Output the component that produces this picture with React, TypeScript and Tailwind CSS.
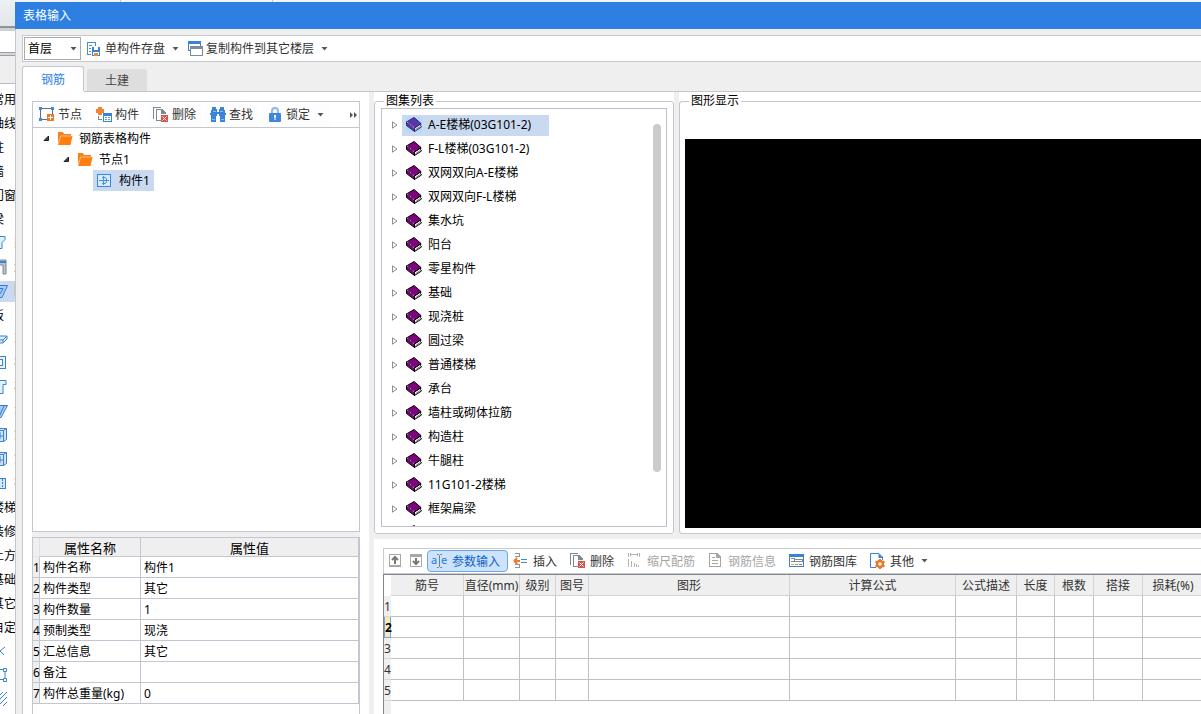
import type { ReactNode } from "react";

const sideItems = [
  { label: "常用" },
  { label: "轴线" },
  { label: "柱" },
  { label: "墙" },
  { label: "门窗" },
  { label: "梁" },
  { label: "梁", icon: "beam" },
  { label: "连", icon: "lintel" },
  { label: "圈", icon: "ring", active: true },
  { label: "板" },
  { label: "现", icon: "slab" },
  { label: "板", icon: "hole" },
  { label: "柱", icon: "cap" },
  { label: "坡", icon: "ramp" },
  { label: "筋", icon: "rebar" },
  { label: "筋", icon: "rebar" },
  { label: "板", icon: "strip" },
  { label: "楼梯" },
  { label: "装修" },
  { label: "土方" },
  { label: "基础" },
  { label: "其它" },
  { label: "自定" },
  { label: "", icon: "point" },
  { label: "", icon: "line" },
  { label: "", icon: "hatch" },
];

const atlas = [
  "A-E楼梯(03G101-2)",
  "F-L楼梯(03G101-2)",
  "双网双向A-E楼梯",
  "双网双向F-L楼梯",
  "集水坑",
  "阳台",
  "零星构件",
  "基础",
  "现浇桩",
  "圆过梁",
  "普通楼梯",
  "承台",
  "墙柱或砌体拉筋",
  "构造柱",
  "牛腿柱",
  "11G101-2楼梯",
  "框架扁梁",
  "",
];

const props = [
  ["构件名称", "构件1"],
  ["构件类型", "其它"],
  ["构件数量", "1"],
  ["预制类型", "现浇"],
  ["汇总信息", "其它"],
  ["备注", ""],
  ["构件总重量(kg)", "0"],
];

const columns = [
  "筋号",
  "直径(mm)",
  "级别",
  "图号",
  "图形",
  "计算公式",
  "公式描述",
  "长度",
  "根数",
  "搭接",
  "损耗(%)",
];

function Icon({ children, crisp = true }: { children: ReactNode; crisp?: boolean }) {
  return (
    <svg
      viewBox="0 0 16 16"
      fill="none"
      shapeRendering={crisp ? "crispEdges" : "auto"}
      className="h-4 w-4 shrink-0"
      aria-hidden="true"
    >
      {children}
    </svg>
  );
}

function Caret() {
  return (
    <svg viewBox="0 0 7 4" className="h-1 w-[7px] shrink-0" aria-hidden="true">
      <path d="M0.500 0h6L3.500 3.500z" fill="#555" />
    </svg>
  );
}

function SideIcon({ name }: { name: string }) {
  return (
    <Icon crisp={false}>
      {name === "beam" && <path d="M1 1.500h12v3l-3 3v6h-3v-6L3 4.500" fill="#e4effb" stroke="#3b82d0" />}
      {name === "lintel" && (
        <>
          <path d="M1 1h13v14h-3V6H1z" fill="#b9c2ca" stroke="#7f8c96" />
          <path d="M1 3h13" stroke="#3b82d0" strokeWidth="2" />
        </>
      )}
      {name === "ring" && <path d="M1 2.500h14.500L10 14.500H6zM4 5.500h7L8 11" fill="#a9cbf2" stroke="#2f7cd6" />}
      {name === "slab" && (
        <>
          <path d="M1 9l5-4h9v3l-4 4H1z" fill="#dcebfb" stroke="#3b82d0" />
          <path d="M1 9h10l4-4M11 9v3" stroke="#3b82d0" />
        </>
      )}
      {name === "hole" && (
        <>
          <rect x="1.500" y="1.500" width="12" height="12" fill="#eaf3fd" stroke="#3b82d0" />
          <rect x="4.500" y="4.500" width="6" height="6" fill="#fff" stroke="#3b82d0" />
        </>
      )}
      {name === "cap" && <path d="M1 1.500h13v4h-3v9H7v-9H1z" fill="#e4effb" stroke="#3b82d0" />}
      {name === "ramp" && <path d="M1 2.500h14.500L9 14.500H5zM12 3L7 14M4 3l4 8" fill="#a9cbf2" stroke="#2f7cd6" />}
      {name === "rebar" && (
        <>
          <path d="M1 3.500l3-2h10.500v11l-3 2H1z" fill="#cfe3fa" stroke="#3b82d0" />
          <path d="M11.500 3.500v11M1 3.500h10.500l3-2M8 5v7M4 9h7" stroke="#3b82d0" />
        </>
      )}
      {name === "strip" && (
        <>
          <rect x="1.500" y="3.500" width="12" height="10" fill="#d5e7fb" stroke="#3b82d0" />
          <path d="M10.500 4v9" stroke="#3b82d0" strokeDasharray="2 1" />
        </>
      )}
      {name === "point" && <path d="M4 8h4l5-4M8 8l4 4" stroke="#3b82d0" />}
      {name === "line" && (
        <>
          <path d="M1 2.500h12v10H1" stroke="#3b82d0" />
          <path d="M11.500 1.500h3v3h-3zM11.500 11.500h3v3h-3z" fill="#fff" stroke="#3b82d0" />
        </>
      )}
      {name === "hatch" && <path d="M7 9l8-8M7 14L15 6M11 15l4-4M3 9l8-8" stroke="#3b82d0" />}
    </Icon>
  );
}

function SaveIcon() {
  return (
    <Icon>
      <path d="M1.500 14V1.500h8V5" stroke="#4a8bd8" />
      <path d="M3 4h3M3 7h2M3 10h2" stroke="#4a8bd8" />
      <path d="M1.500 13.500H5" stroke="#4a8bd8" />
      <path d="M6 6h7l1 1v8H6z" fill="#3b82d6" />
      <path d="M8 6h4v3H8z" fill="#fff" />
      <path d="M7 11h6v3H7z" fill="#fff" />
      <path d="M8 12h4v3H8z" fill="#f08a24" />
    </Icon>
  );
}

function CopyLayersIcon() {
  return (
    <Icon>
      <path d="M1.500 0.500h12v9h-12z" fill="#fff" stroke="#3b82d6" />
      <path d="M1 0h13v3H1z" fill="#3b82d6" />
      <path d="M3.500 5.500h12v9h-12z" fill="#fff" stroke="#7d8b94" />
      <path d="M3 5h13v3H3z" fill="#7d8b94" />
    </Icon>
  );
}

function NodeIcon() {
  return (
    <Icon>
      <path d="M1.500 2v10M3 1.500h9M13.500 2v5M3 12.500h5" stroke="#5c7186" />
      <path d="M0 0h3v3H0zM12 0h3v3h-3zM0 11h3v3H0z" fill="#3b8ae0" />
      <path d="M8 7h7v7H8z" fill="#ef7622" />
      <path d="M9 10.500h5M11.500 8v5" stroke="#fff" />
    </Icon>
  );
}

function ComponentIcon() {
  return (
    <Icon>
      <path d="M2 0h4v2h2v4H6v2H2V6H0V2h2z" fill="#f0803a" />
      <path d="M2.500 9v3.500H6" stroke="#7d8b94" />
      <path d="M7.500 6.500h8v8h-8z" fill="#fff" stroke="#3b82d6" />
      <path d="M7 6h9v3H7z" fill="#3b82d6" />
      <path d="M9 10.500h2M12 10.500h2M9 12.500h2M12 12.500h2" stroke="#5794dc" />
    </Icon>
  );
}

function DeleteIcon() {
  return (
    <Icon>
      <path d="M0.500 12V0.500H8" stroke="#7d8b94" />
      <path d="M3.500 14V2.500H9l3.500 3.500v1M3 13.500h5" stroke="#7d8b94" />
      <path d="M8 2v5h5z" fill="#7d8b94" />
      <path d="M8 8h7v7H8z" fill="#d9504f" />
      <path d="M9.500 9.500l4 4M13.500 9.500l-4 4" stroke="#fff" shapeRendering="auto" />
    </Icon>
  );
}

function BinocularsIcon() {
  return (
    <Icon>
      <path d="M2 0h4v2h1v3h2V2h1V0h4v3h1v3h1v2h-1v7h-5V9H9V7H7v2H6v6H1V8H0V6h1V3h1z" fill="#3985dc" />
      <path d="M2 12h3M11 12h3M3 4h3M10 4h3" stroke="#8dbcf0" />
    </Icon>
  );
}

function LockIcon() {
  return (
    <Icon crisp={false}>
      <path d="M5 8V4a3 3 0 0 1 6 0V8" stroke="#8fb9ea" strokeWidth="2" />
      <rect x="2" y="6" width="12" height="9" rx="1" fill="#3d87de" />
      <path d="M7 8h2v2.500H8.500V13h-1v-2.500H7z" fill="#fff" />
    </Icon>
  );
}

function FolderIcon() {
  return (
    <Icon crisp={false}>
      <path d="M1 1h5l1 2h7v3H4L1 12z" fill="#f58220" />
      <path d="M3.500 5H15.500L13.500 14H1z" fill="#ff7f0e" />
      <path d="M1.300 12.500L3.700 5H14.500" stroke="#ffd0a0" strokeWidth="0.700" />
    </Icon>
  );
}

function PartIcon() {
  return (
    <Icon>
      <rect x="0.500" y="1.500" width="13" height="12" fill="#d6e8fb" stroke="#3b8ae0" />
      <path d="M2 7.500h10M6.500 3v9M5 4.500h3.500l1.500 3-1.500 3H5" stroke="#4a90e0" shapeRendering="auto" />
    </Icon>
  );
}

function BookIcon({ active }: { active: boolean }) {
  const cover = active ? "#5e32a8" : "#80007f";
  const line = active ? "#27306e" : "#000";
  return (
    <Icon crisp={false}>
      {active && <path d="M0 0h16v15H0z" fill="#b5d9fb" />}
      <path d="M8.500 11L15 6.700l-.5 1.800 1 1.500-7 4.500z" fill={active ? "#d7e8fa" : "#fff"} stroke={line} />
      <path d="M9.500 12.700l4.500-3" stroke="#777" />
      <path d="M0.500 5v3.500L8.500 14.500V11z" fill={cover} stroke={line} />
      <path d="M0.500 5L8 0.500 15 6.500 8.500 11z" fill={cover} stroke={line} />
      <path d="M1 5l7.500 6" stroke="#e8d8ef" strokeDasharray="1 1" />
    </Icon>
  );
}

function MoveIcon({ down = false }: { down?: boolean }) {
  return (
    <Icon>
      <rect x="1.500" y="1.500" width="11" height="12" fill="#fff" stroke="#a8a8a8" />
      <path d={down ? "M1 1h12v3H1z" : "M1 12h12v2H1z"} fill="#a8a8a8" />
      <path
        d={down ? "M7 5v6M4 8l3 3 3-3" : "M7 11V4M4 7l3-3 3 3"}
        stroke="#777"
        strokeWidth="2"
        shapeRendering="auto"
      />
    </Icon>
  );
}

function ParamIcon() {
  return (
    <svg viewBox="0 0 16 16" className="h-4 w-4 shrink-0 overflow-visible" aria-hidden="true">
      <text x="-1" y="11" fontSize="11" fill="#1f7ae0">
        a
      </text>
      <text x="9" y="11" fontSize="11" fill="#1f7ae0">
        e
      </text>
      <path d="M5 1.500h1.500l1 1 1-1H10M5 14.500h1.500l1-1 1 1H10M7.500 2.500v11" fill="none" stroke="#6f7f8c" />
    </svg>
  );
}

function InsertIcon() {
  return (
    <Icon>
      <path d="M2 0.500h4.500V4M2 3.500h5M2 11.500h4.500V15M2 14.500h5" stroke="#8a949c" />
      <path d="M8 6.500h6M8 9.500h6" stroke="#3b8ae0" />
      <path d="M1 8h6M4 5L1.500 8 4 11" stroke="#f07b28" strokeWidth="2" shapeRendering="auto" />
    </Icon>
  );
}

function ScaleIcon() {
  return (
    <Icon>
      <path
        d="M1.500 0v4M12.500 0v4M3 1.500h8M3.500 0v3M10.500 0v3M1.500 6v8M4.500 8v6M7.500 10v4M9.500 11v3M11.500 12v2"
        stroke="#b3b3b3"
      />
    </Icon>
  );
}

function InfoIcon() {
  return (
    <Icon>
      <path d="M1.500 0.500H9l3.500 3.500v9.500h-11z" stroke="#a6a6a6" />
      <path d="M8 0v5h5zM4 7h6v1H4zM4 10h6v1H4z" fill="#a6a6a6" />
      <path d="M4 4.500h3" stroke="#a6a6a6" />
    </Icon>
  );
}

function LibraryIcon() {
  return (
    <Icon>
      <path d="M0.500 1.500h14v12H0.500z" fill="#fff" stroke="#3b82d6" />
      <path d="M0 1h15v3H0z" fill="#3b82d6" />
      <path d="M2 5.500h3v3H2M5 8.500h8v-2H6" stroke="#7d8b94" />
      <path d="M2 11h3v1H2z" fill="#f6a623" />
      <path d="M6 11h3v1H6z" fill="#54b86a" />
      <path d="M10 11h3v1h-3z" fill="#e9564f" />
    </Icon>
  );
}

function OtherIcon() {
  return (
    <Icon crisp={false}>
      <path d="M6 14.500H0.500v-14h8.500l3.500 3.500v3" stroke="#3b82d6" />
      <path d="M8.500 0.500v4.500h4.500z" fill="#3b82d6" />
      <circle cx="10" cy="11" r="3" stroke="#ef7622" strokeWidth="2.400" />
      <path d="M10 6v2M10 14v2M5.500 8.500l2 1M12.500 12.500l2 1M14.500 8.500l-2 1M7.500 12.500l-2 1" stroke="#ef7622" strokeWidth="2" />
    </Icon>
  );
}

function ToolButton({ icon, label, menu = false }: { icon: ReactNode; label: string; menu?: boolean }) {
  return (
    <button className="flex h-[22px] shrink-0 items-center gap-[3px] rounded-sm bg-[#fdfdfd] px-[6px] whitespace-nowrap">
      {icon}
      <span>{label}</span>
      {menu && (
        <span className="pl-1">
          <Caret />
        </span>
      )}
    </button>
  );
}

function GridButton({
  icon,
  label,
  active = false,
  disabled = false,
  menu = false,
}: {
  icon: ReactNode;
  label: string;
  active?: boolean;
  disabled?: boolean;
  menu?: boolean;
}) {
  return (
    <button
      disabled={disabled}
      className={`flex h-[22px] shrink-0 items-center gap-1 rounded-sm border pr-[7px] pl-1 whitespace-nowrap ${
        active ? "border-[#6aa7ea] bg-[#cde3fb] text-[#0d62c9]" : "border-transparent"
      } ${disabled ? "text-[#a6a6a6]" : ""}`}
    >
      {icon}
      <span className="pt-[2px]">{label}</span>
      {menu && (
        <span className="pl-[3px]">
          <Caret />
        </span>
      )}
    </button>
  );
}

function SideNav() {
  return (
    <nav className="flex w-[15px] shrink-0 flex-col overflow-hidden bg-white">
      <div className="h-[26px] shrink-0 bg-linear-to-b from-[#eef1f3] to-[#e2e6e8]" />
      <div className="h-[5px] shrink-0 border-t-2 border-[#909498] bg-[#cdd0d4]" />
      <div className="h-[21px] shrink-0 bg-white" />
      <div className="h-[4px] shrink-0 border-y border-[#9a9da2] bg-[#d5d7da]" />
      <div className="h-7 shrink-0 border-b border-[#b9bcc4] bg-[#efefef]" />
      <ul className="pt-[3px]">
        {sideItems.map((item, i) => (
          <li key={i} className="flex h-6 items-center">
            <a
              href="#"
              className={`flex h-[21px] w-full items-center whitespace-nowrap ${item.active ? "bg-[#c9d9f0]" : ""}`}
            >
              <span className="-ml-2 flex items-center gap-[6px]">
                {item.icon && <SideIcon name={item.icon} />}
                <span className={item.icon ? "text-[#b5762a]" : "pt-[2px]"}>{item.label}</span>
              </span>
            </a>
          </li>
        ))}
      </ul>
    </nav>
  );
}

function MainToolbar() {
  return (
    <div className="flex h-[27px] items-center border-y border-l border-[#c6c8cc] bg-white pl-px text-[#333]">
      <div className="relative mr-[2px]">
        <select
          aria-label="楼层"
          className="block h-[23px] w-[57px] appearance-none border border-[#a9abaf] bg-white pl-[3px] text-black"
        >
          <option>首层</option>
        </select>
        <span className="pointer-events-none absolute top-[10px] right-1">
          <Caret />
        </span>
      </div>
      <button className="flex items-center gap-[3px] px-[3px] whitespace-nowrap">
        <SaveIcon />
        <span className="pr-1">单构件存盘</span>
        <Caret />
      </button>
      <button className="ml-[2px] flex items-center gap-[3px] px-[3px] whitespace-nowrap">
        <CopyLayersIcon />
        <span className="pr-1">复制构件到其它楼层</span>
        <Caret />
      </button>
    </div>
  );
}

function TreeArrow() {
  return (
    <svg viewBox="0 0 7 7" className="h-[7px] w-[7px] shrink-0" aria-hidden="true">
      <path d="M5.500 1V5.500H1z" fill="#444" stroke="#222" />
    </svg>
  );
}

function ComponentTree() {
  return (
    <section className="flex min-h-0 flex-1 flex-col">
      <div className="flex h-[26px] shrink-0 items-center gap-[2px] border-x border-t border-[#c3c6ce] bg-white text-[#333]">
        <ToolButton icon={<NodeIcon />} label="节点" />
        <ToolButton icon={<ComponentIcon />} label="构件" />
        <ToolButton icon={<DeleteIcon />} label="删除" />
        <ToolButton icon={<BinocularsIcon />} label="查找" />
        <ToolButton icon={<LockIcon />} label="锁定" menu />
        <button aria-label="更多" className="mr-[2px] ml-auto">
          <svg viewBox="0 0 7 6" className="h-[6px] w-[7px]" aria-hidden="true">
            <path d="M0 0l3 3-3 3zM4 0l3 3-3 3z" fill="#555" />
          </svg>
        </button>
      </div>
      <ul className="min-h-0 flex-1 border border-[#c3c6ce] bg-white">
        <li className="flex h-[21px] items-center pl-[10px]">
          <TreeArrow />
          <span className="flex items-center gap-[6px] pl-[7px]">
            <FolderIcon />
            钢筋表格构件
          </span>
        </li>
        <li className="flex h-[21px] items-center pl-[30px]">
          <TreeArrow />
          <span className="flex items-center gap-[6px] pl-[7px]">
            <FolderIcon />
            节点1
          </span>
        </li>
        <li className="flex h-[21px] pl-[60px]">
          <span className="flex items-center gap-[6px] bg-[#c9d9f0] pr-1 pl-1">
            <PartIcon />
            构件1
          </span>
        </li>
      </ul>
    </section>
  );
}

function PropertyTable() {
  return (
    <section className="h-[177px] shrink-0 overflow-hidden border-x border-t border-[#c3c6ce] bg-white">
      <table className="w-full table-fixed border-separate border-spacing-0 whitespace-nowrap">
        <colgroup>
          <col className="w-[7px]" />
          <col className="w-[101px]" />
          <col />
        </colgroup>
        <thead>
          <tr className="h-[19px] bg-[#efefef] text-[13px] leading-4">
            <td className="border-r border-b border-[#e2e2e6] p-0" />
            <th className="border-r border-b border-[#c3c6d2] p-0 pt-[2px] font-normal">属性名称</th>
            <th className="border-r border-b border-[#c3c6d2] p-0 pt-[2px] font-normal">属性值</th>
          </tr>
        </thead>
        <tbody>
          {props.map(([name, value], i) => (
            <tr key={name} className="h-[21px]">
              <th className="border-r border-b border-[#c3c6d2] bg-[#efefef] p-0 pt-[2px] text-left font-normal">
                {i + 1}
              </th>
              <td className="border-r border-b border-[#c3c6d2] p-0 pt-[2px] pl-[3px]">{name}</td>
              <td className="border-r border-b border-[#c3c6d2] p-0 pt-[2px] pl-[3px]">{value}</td>
            </tr>
          ))}
        </tbody>
      </table>
    </section>
  );
}

function AtlasList() {
  return (
    <fieldset className="mt-[2px] flex w-[300px] shrink-0 flex-col rounded-[3px] border border-[#c3c6ce] px-[6px] pb-[6px]">
      <legend className="ml-[3px] px-[2px] leading-[14px]">图集列表</legend>
      <div className="flex min-h-0 flex-1 border border-[#c0c0cc]">
        <ul className="min-h-0 flex-1 overflow-hidden pt-1">
          {atlas.map((name, i) => (
            <li key={name} className="flex h-6 items-center gap-1 pl-[10px]">
              <svg viewBox="0 0 6 9" className="h-[9px] w-[6px] shrink-0" aria-hidden="true">
                <path d="M0.500 0.800v6.400L5 4z" fill="#fff" stroke="#8f8f8f" />
              </svg>
              <span
                className={`flex h-[21px] items-center gap-[6px] pr-[18px] pl-1 whitespace-nowrap ${i === 0 ? "bg-[#c9d9f0]" : ""}`}
              >
                <BookIcon active={i === 0} />
                {name}
              </span>
            </li>
          ))}
        </ul>
        <div className="mt-[15px] mr-[5px] h-5/6 w-2 rounded-full bg-[#cbcbcb]" />
      </div>
    </fieldset>
  );
}

function Preview() {
  return (
    <fieldset className="mt-[2px] flex min-w-0 flex-1 flex-col rounded-l-[3px] border-y border-l border-[#c3c6ce] pb-[5px] pl-[5px]">
      <legend className="ml-1 px-[2px] leading-[14px]">图形显示</legend>
      <div className="mt-[31px] min-h-0 flex-1 bg-black" />
    </fieldset>
  );
}

function RebarGrid() {
  return (
    <section className="h-[175px] shrink-0 overflow-hidden bg-white pt-[9px] pl-[9px]">
      <div className="flex h-[26px] items-center border-y border-l border-[#c9cbcf] pl-px text-[#333]">
        <button aria-label="上移" disabled className="flex w-[21px] shrink-0 justify-center">
          <MoveIcon />
        </button>
        <button aria-label="下移" disabled className="flex w-[21px] shrink-0 justify-center">
          <MoveIcon down />
        </button>
        <GridButton icon={<ParamIcon />} label="参数输入" active />
        <GridButton icon={<InsertIcon />} label="插入" />
        <GridButton icon={<DeleteIcon />} label="删除" />
        <GridButton icon={<ScaleIcon />} label="缩尺配筋" disabled />
        <GridButton icon={<InfoIcon />} label="钢筋信息" disabled />
        <GridButton icon={<LibraryIcon />} label="钢筋图库" />
        <GridButton icon={<OtherIcon />} label="其他" menu />
      </div>
      <div className="h-full border-t border-l border-[#7f878e]">
        <table className="w-full min-w-[820px] table-fixed border-separate border-spacing-0 whitespace-nowrap text-[#333]">
          <colgroup>
            <col className="w-[7px]" />
            <col className="w-[73px]" />
            <col className="w-[56px]" />
            <col className="w-[36px]" />
            <col className="w-[33px]" />
            <col className="w-[201px]" />
            <col className="w-[166px]" />
            <col className="w-[61px]" />
            <col className="w-[38px]" />
            <col className="w-[39px]" />
            <col className="w-[49px]" />
            <col />
          </colgroup>
          <thead>
            <tr className="h-[21px]">
              <td className="p-0" />
              {columns.map((name) => (
                <th key={name} className="border-r border-b border-[#d3d3d3] bg-[#efefef] p-0 pt-[2px] font-normal">
                  {name}
                </th>
              ))}
            </tr>
          </thead>
          <tbody>
            {[1, 2, 3, 4, 5].map((n) => (
              <tr key={n} className="h-[21px]">
                <th
                  className={`border-b p-0 pt-[2px] text-left ${
                    n === 2
                      ? "border-x border-[#6aa7ea] bg-[#fde9ae] font-bold text-black"
                      : "border-[#d8d8d8] bg-[#efefef] font-normal"
                  }`}
                >
                  {n}
                </th>
                {columns.map((name) => (
                  <td key={name} className="border-r border-b border-[#c0c0c0] p-0" />
                ))}
              </tr>
            ))}
          </tbody>
        </table>
        <div className="h-full w-[7px] bg-[#efefef]" />
      </div>
    </section>
  );
}

export default function App() {
  return (
    <div className="flex h-screen overflow-hidden bg-[#efefef] font-['Noto_Sans','Noto_Sans_CJK_SC',sans-serif] text-xs text-black">
      <SideNav />
      <main className="flex min-w-0 flex-1 flex-col">
        <div className="flex h-[2px] shrink-0 bg-[#f0f4f7]">
          <div className="w-[106px] border-r border-[#c5cad0]" />
          <div className="w-[152px] border-r border-[#c5cad0]" />
        </div>
        <h1 className="h-[27px] shrink-0 bg-[#2d7fe2] pl-2 leading-[27px] text-white">表格输入</h1>
        <div className="flex min-h-0 flex-1 flex-col border-l border-[#c3c6ce] pt-[6px] pl-[6px]">
          <MainToolbar />
          <div role="tablist" className="-mb-px flex items-end gap-[3px] pt-1">
            <button
              role="tab"
              aria-selected="true"
              className="h-[26px] w-[62px] rounded-t-[3px] border-x border-t border-[#c3c6ce] bg-white text-[#2d7fe2]"
            >
              钢筋
            </button>
            <button
              role="tab"
              aria-selected="false"
              className="mb-px h-[22px] w-[60px] rounded-t-[3px] bg-[#dedede] pt-[2px] text-[#444]"
            >
              土建
            </button>
          </div>
          <div className="flex min-h-0 flex-1">
            <div className="flex w-[347px] shrink-0 flex-col border-l border-[#c3c6ce] bg-white">
              <div className="ml-[61px] h-px shrink-0 bg-[#c3c6ce]" />
              <div className="flex min-h-0 flex-1 flex-col pt-[9px] pr-[9px] pl-[9px]">
                <ComponentTree />
                <div className="h-[5px] shrink-0 bg-[#efefef]" />
                <PropertyTable />
              </div>
            </div>
            <div className="w-[5px] shrink-0 border-t border-[#c3c6ce]" />
            <div className="flex min-w-0 flex-1 flex-col border-t border-[#c3c6ce]">
              <div className="flex min-h-0 flex-1">
                <div className="flex bg-white">
                  <AtlasList />
                </div>
                <div className="w-[5px] shrink-0" />
                <div className="flex min-w-0 flex-1 bg-white">
                  <Preview />
                </div>
              </div>
              <div className="h-[5px] shrink-0" />
              <RebarGrid />
            </div>
          </div>
        </div>
      </main>
    </div>
  );
}
